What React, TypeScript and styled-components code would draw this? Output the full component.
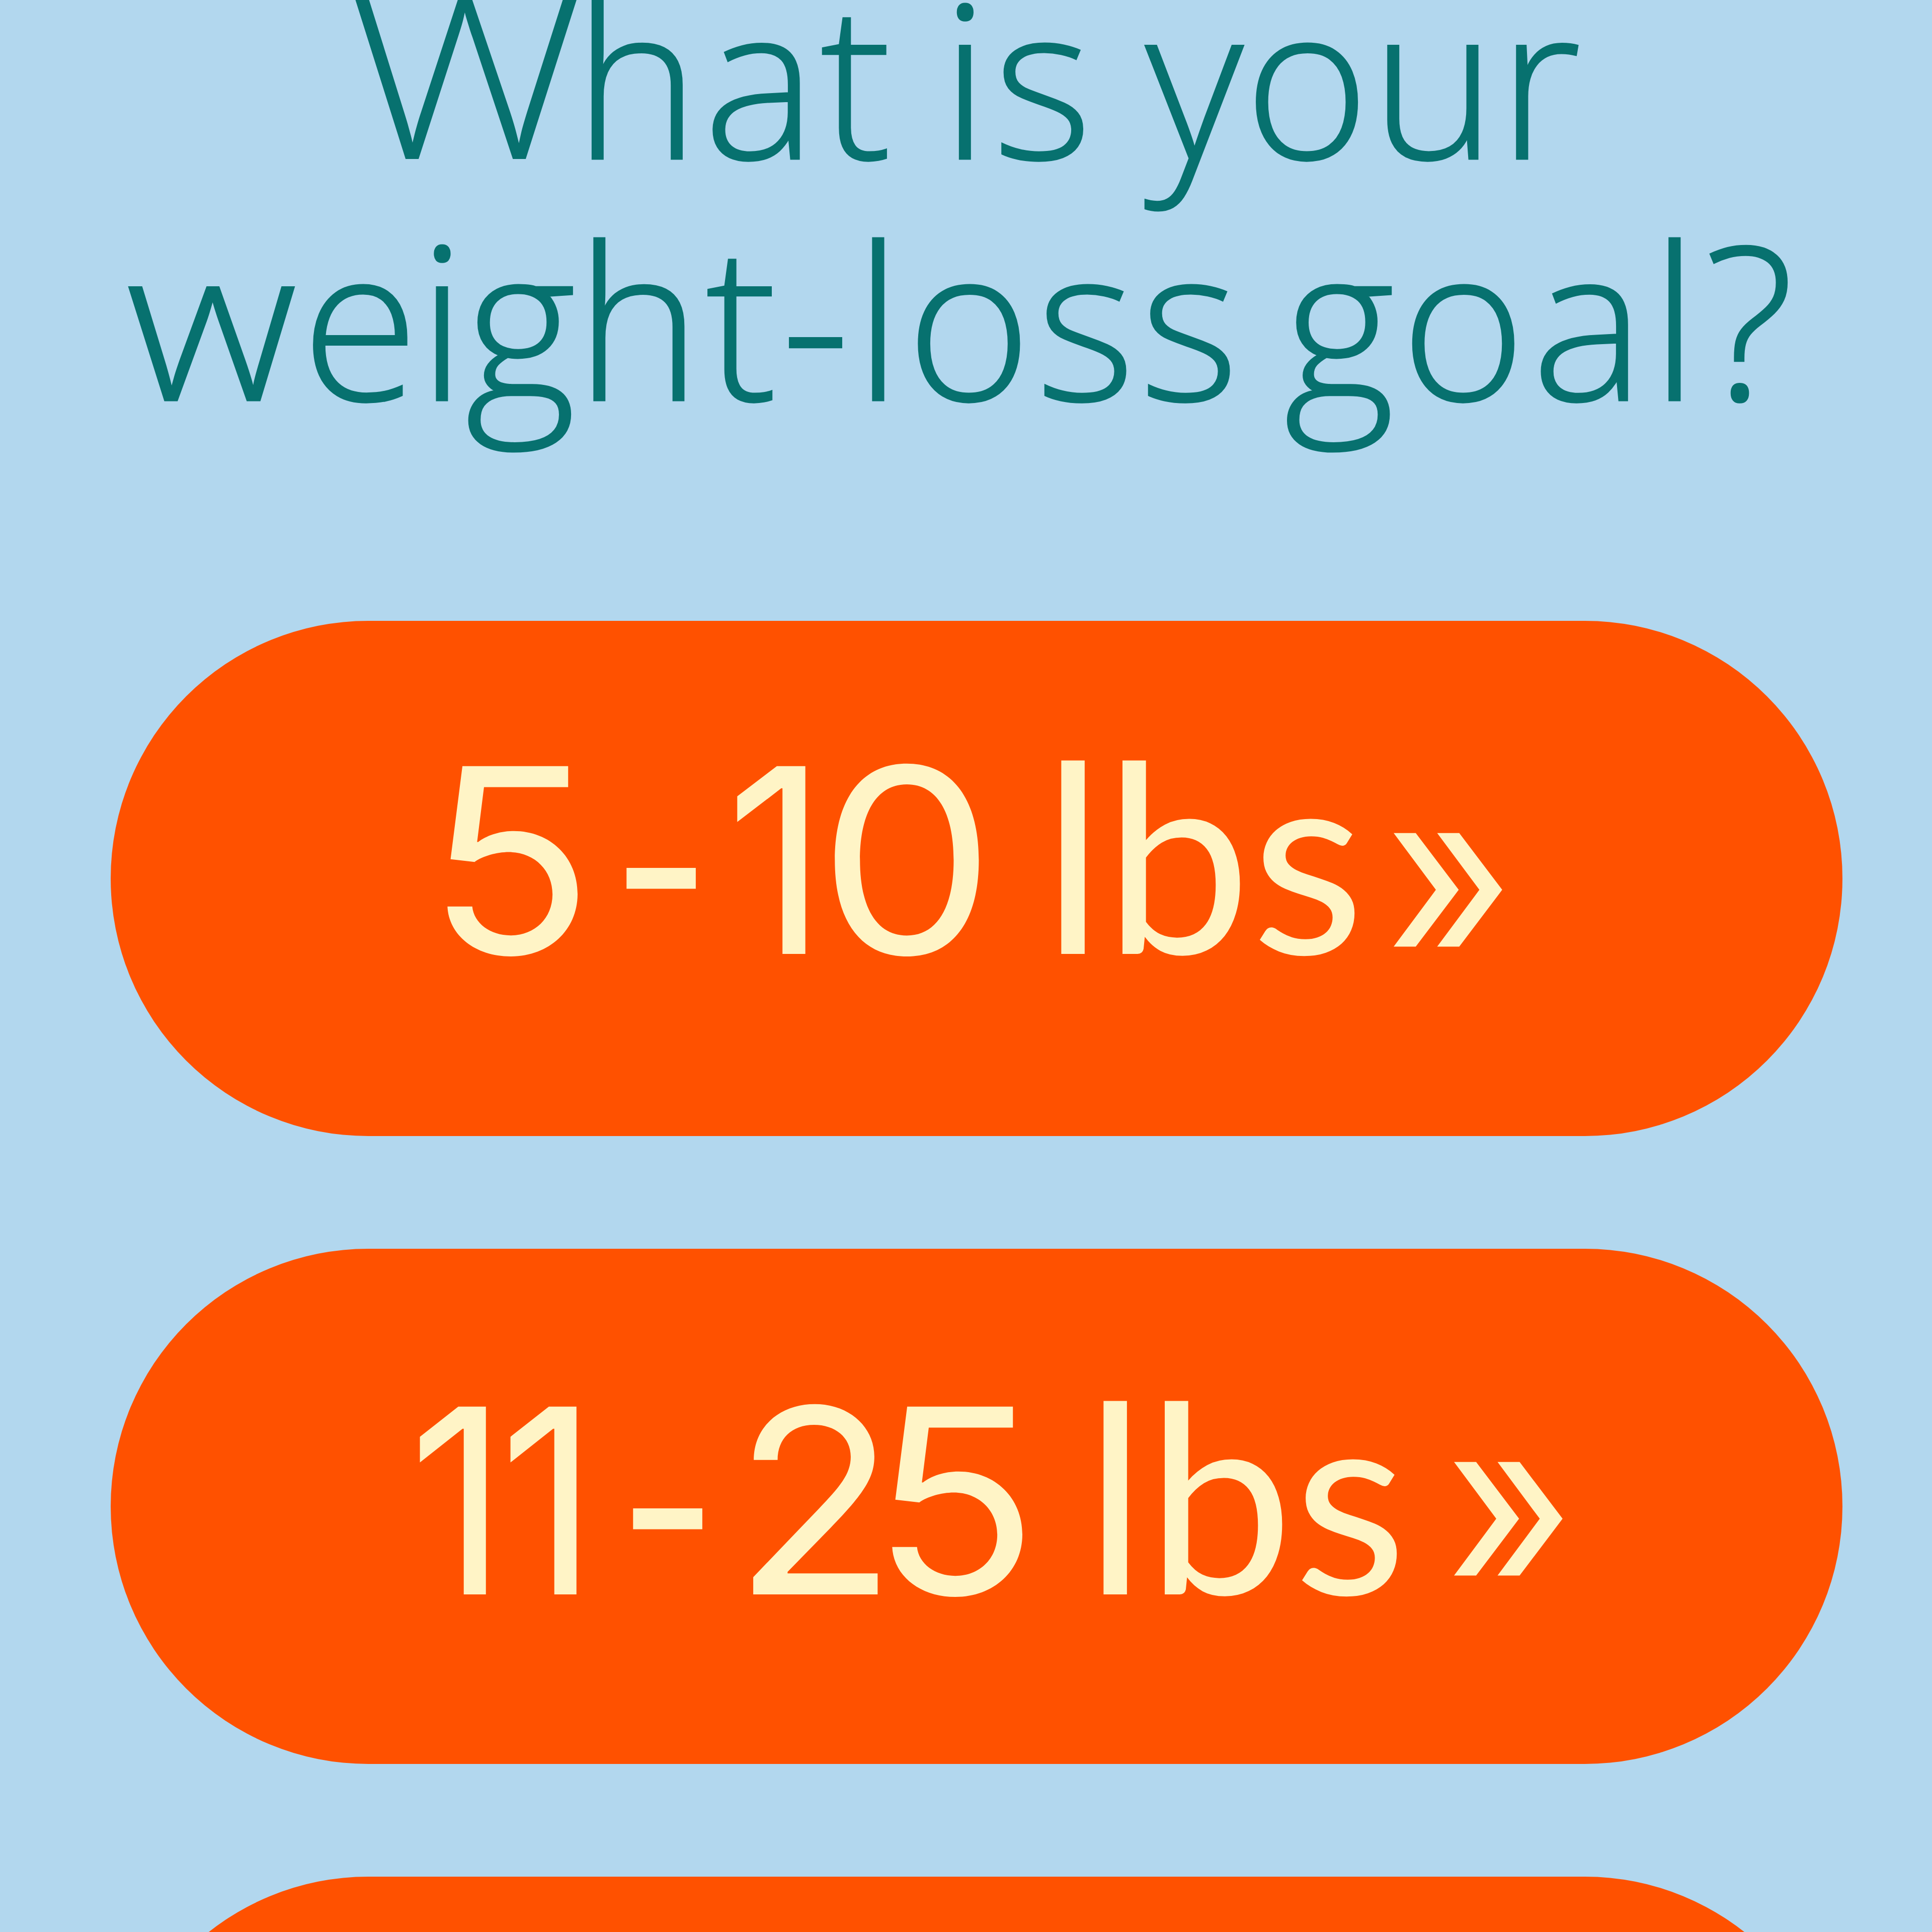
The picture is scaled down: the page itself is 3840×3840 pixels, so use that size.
import React from 'react';
import styled, { createGlobalStyle } from 'styled-components';

// ===== Global styles =====
const GlobalStyle = createGlobalStyle`
  body {
    margin: 0;
    overflow: hidden;
    background: #b2d7ee;
  }
`;

// ===== Layout =====
const Screen = styled.main`
  display: flex;
  flex-direction: column;
  box-sizing: border-box;
  width: 3840px;
  height: 3840px;
  overflow: hidden;
  background: #b2d7ee;
`;

// The first line is cut off by the top of the screen
const Question = styled.h1`
  flex: none;
  height: 1322px;
  margin: -88px 0 0;
  color: #07716f;
  font-family: 'Open Sans', sans-serif;
  font-size: 425px;
  font-weight: 300;
  line-height: 480px;
  -webkit-text-stroke: 3px #07716f;
`;

const Line = styled.span<{ $indent: number }>`
  display: flex;
  align-items: baseline;
  height: 480px;
  padding-left: ${({ $indent }) => $indent}px;
  white-space: pre;
`;

const Word = styled.span<{ $width: number; $tracking?: number }>`
  flex: none;
  width: ${({ $width }) => $width}px;
  letter-spacing: ${({ $tracking = 0 }) => $tracking}px;
`;

// Letters drawn wider than the rest of the word
const Capital = styled.span`
  display: inline-block;
  width: 448px;
  font-size: 448px;
  line-height: 1;
  letter-spacing: 0;
  -webkit-text-stroke: 0;
  transform: scaleX(1.17);
  transform-origin: left;
`;

const WideLetter = styled.span`
  display: inline-block;
  margin-right: 34px;
  transform: scaleX(1.11);
  transform-origin: left;
`;

const Tight = styled.span`
  letter-spacing: -2px;
`;

const Options = styled.div`
  display: flex;
  flex-direction: column;
  gap: 224px;
  padding: 0 178px 0 220px;
`;

// Answer pill
const Option = styled.button<{ $indent?: number; $lift?: number }>`
  display: flex;
  flex: none;
  align-items: center;
  box-sizing: border-box;
  width: 3442px;
  height: 1024px;
  padding: 0 0 ${({ $lift = 0 }) => $lift}px ${({ $indent = 0 }) => $indent}px;
  border: 0;
  border-radius: 512px;
  background: #ff5100;
`;

const Label = styled.span`
  display: block;
  height: 620px;
  color: #fff4c6;
  font-family: Inter, sans-serif;
  font-size: 513px;
  font-weight: 400;
  line-height: 620px;
  text-align: left;
  white-space: pre;
`;

const Figure = styled.span<{ $width: number; $stretch?: number }>`
  display: inline-block;
  width: ${({ $width }) => $width}px;
  line-height: 1;
  transform: scaleX(${({ $stretch = 1 }) => $stretch});
  transform-origin: left;
`;

const Dash = styled(Figure)`
  transform: translateY(9px) scaleX(0.84);
`;

const Unit = styled(Figure)`
  font-family: Lato, sans-serif;
  font-size: 522px;
`;

const Chevrons = styled.span<{ $drop: number }>`
  display: inline-block;
  font-size: 490px;
  line-height: 1;
  transform: translateY(${({ $drop }) => $drop}px) scaleX(0.89);
  transform-origin: left;
`;

// ===== Data =====
interface Digit {
  char: string;
  width: number;
  stretch: number;
}

interface Goal {
  from: Digit[];
  to: Digit[];
  indent: number;
  lift: number;
  dashWidth: number;
  unitWidth: number;
  chevronDrop: number;
}

const goals: Goal[] = [
  {
    from: [{ char: '5', width: 368, stretch: 1.07 }],
    to: [
      { char: '1', width: 184, stretch: 0.97 },
      { char: '0', width: 445, stretch: 1.09 },
    ],
    indent: 627,
    lift: 72,
    dashWidth: 227,
    unitWidth: 682,
    chevronDrop: 20,
  },
  {
    from: [
      { char: '1', width: 180, stretch: 0.94 },
      { char: '1', width: 236, stretch: 0.94 },
    ],
    to: [
      { char: '2', width: 274, stretch: 1.04 },
      { char: '5', width: 424, stretch: 1.07 },
    ],
    indent: 592,
    lift: 22,
    dashWidth: 229,
    unitWidth: 718,
    chevronDrop: -3,
  },
];

const renderDigits = (digits: Digit[]) =>
  digits.map((digit, index) => (
    <Figure key={index} $width={digit.width} $stretch={digit.stretch}>
      {digit.char}
    </Figure>
  ));

const App: React.FC = () => (
  <>
    <GlobalStyle />
    <Screen>
      <Question>
        <Line $indent={692}>
          <Word $width={1178} $tracking={7}>
            <Capital>W</Capital>hat
          </Word>
          <Word $width={406} $tracking={7}>is</Word>
          <Word $width={900} $tracking={2}>your</Word>
        </Line>
        <Line $indent={250}>
          <Word $width={2302} $tracking={8}>
            <WideLetter>w</WideLetter>
            <Tight>eig</Tight>ht-loss
          </Word>
          <Word $width={1000} $tracking={11}>goal?</Word>
        </Line>
      </Question>
      <Options>
        {goals.map((goal, index) => (
          <Option key={index} $indent={goal.indent} $lift={goal.lift}>
            <Label>
              {renderDigits(goal.from)}
              <Dash $width={goal.dashWidth}>-</Dash>
              {renderDigits(goal.to)}
              <Unit $width={goal.unitWidth}>lbs</Unit>
              <Chevrons $drop={goal.chevronDrop}>»</Chevrons>
            </Label>
          </Option>
        ))}
        {/* third answer, only its top edge is on screen */}
        <Option />
      </Options>
    </Screen>
  </>
);

export default App;
